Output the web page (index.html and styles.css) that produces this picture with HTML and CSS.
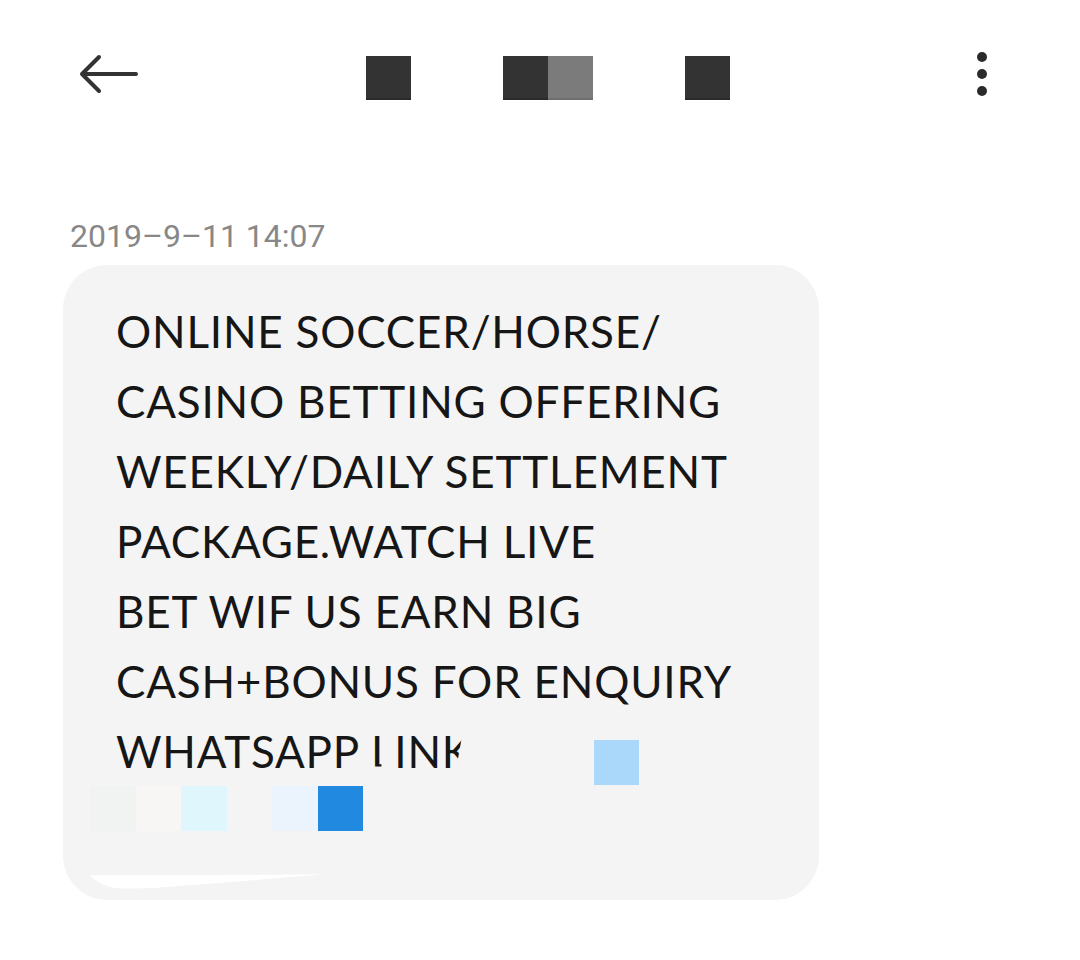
FILE: index.html
```html
<!DOCTYPE html>
<html lang="en">
<head>
<meta charset="utf-8">
<title>Message</title>
<link rel="stylesheet" href="styles.css">
</head>
<body>
<header class="topbar">
  <button class="back" aria-label="Back">
    <svg width="60" height="40" viewBox="0 0 60 40"><path d="M4 20 H58 M21 3 L4 20 L21 37" fill="none" stroke="#333" stroke-width="4" stroke-linecap="round" stroke-linejoin="round"/></svg>
  </button>
  <div class="title">
    <span class="px dark"></span>
    <span class="pair"><span class="px dark"></span><span class="px mid"></span></span>
    <span class="px dark"></span>
  </div>
  <button class="more" aria-label="More">
    <span class="dot"></span><span class="dot"></span><span class="dot"></span>
  </button>
</header>

<main class="thread">
  <div class="stamp">2019–9–11 14:07</div>
  <div class="bubble">
    <p class="msg">ONLINE SOCCER/HORSE/<br>CASINO BETTING OFFERING<br>WEEKLY/DAILY SETTLEMENT<br>PACKAGE.WATCH LIVE<br>BET WIF US EARN BIG<br>CASH+BONUS FOR ENQUIRY<br>WHATSAPP <span class="cut-l">L</span><span class="cut-k">INK</span></p>
    <div class="blur-row">
      <span class="cell c1"></span><span class="cell c2"></span><span class="cell c3"></span><span class="cell"></span><span class="cell c5"></span><span class="cell c6"></span>
    </div>
    <span class="blur-sq"></span>
    <svg class="swoosh" width="300" height="40" viewBox="0 0 300 40"><path d="M2 10 C 80 10, 200 10, 240 9 C 200 12, 140 18, 80 22 C 50 24, 30 24, 22 22 C 12 19, 6 15, 2 10 Z" fill="#fff"/></svg>
  </div>
</main>
</body>
</html>
```
FILE: styles.css
```css
* { box-sizing: border-box; }
body {
  margin: 0;
  background: #fff;
  font-family: "Lato", "Noto Sans", sans-serif;
  color: #161616;
}
button {
  background: none;
  border: 0;
  padding: 0;
  cursor: pointer;
}
.topbar {
  display: flex;
  align-items: center;
  height: 44px;
  margin-top: 56px;
  padding-left: 78px;
  padding-right: 93px;
}
.back {
  display: flex;
  margin-bottom: 8px;
}
.title {
  display: flex;
  gap: 92px;
  margin-left: 228px;
}
.pair { display: flex; }
.px {
  display: block;
  width: 45px;
  height: 44px;
  border-bottom: 2px solid #2a2a2a;
}
.px.dark { background: #333; }
.px.mid { background: #7b7b7b; border-bottom-color: #6e6e6e; }
.more {
  margin-left: auto;
  display: flex;
  flex-direction: column;
  gap: 7px;
  margin-bottom: 8px;
}
.dot {
  display: block;
  width: 10px;
  height: 10px;
  border-radius: 50%;
  background: #2b2b2b;
}
.thread {
  padding: 0 0 0 63px;
}
.stamp {
  margin-top: 116px;
  padding-left: 7px;
  font-family: "Roboto", sans-serif;
  font-size: 32px;
  line-height: 40px;
  color: #888;
}
.bubble {
  position: relative;
  margin-top: 9px;
  width: 756px;
  height: 635px;
  background: #f4f4f4;
  border-radius: 44px;
  padding: 31px 0 0 53px;
}
.msg {
  margin: 0;
  font-size: 44px;
  line-height: 70px;
  letter-spacing: 0.8px;
}
.cut-l {
  clip-path: inset(0 55% 20% 0);
}
.cut-k {
  clip-path: polygon(0 0, 90% 0, 78% 100%, 0 100%);
}
.blur-row {
  display: flex;
  margin-left: -26px;
}
.cell {
  display: block;
  width: 45.5px;
  height: 45px;
}
.c1 { background: #f1f3f3; }
.c2 { background: #f7f6f5; }
.c3 { background: #e0f6fd; }
.c5 { background: #ebf4fc; }
.c6 { background: #2289e0; }
.blur-sq {
  position: absolute;
  left: 531px;
  top: 475px;
  width: 45px;
  height: 45px;
  background: #a9d8fb;
}
.swoosh {
  position: absolute;
  left: 25px;
  top: 600px;
}
```
